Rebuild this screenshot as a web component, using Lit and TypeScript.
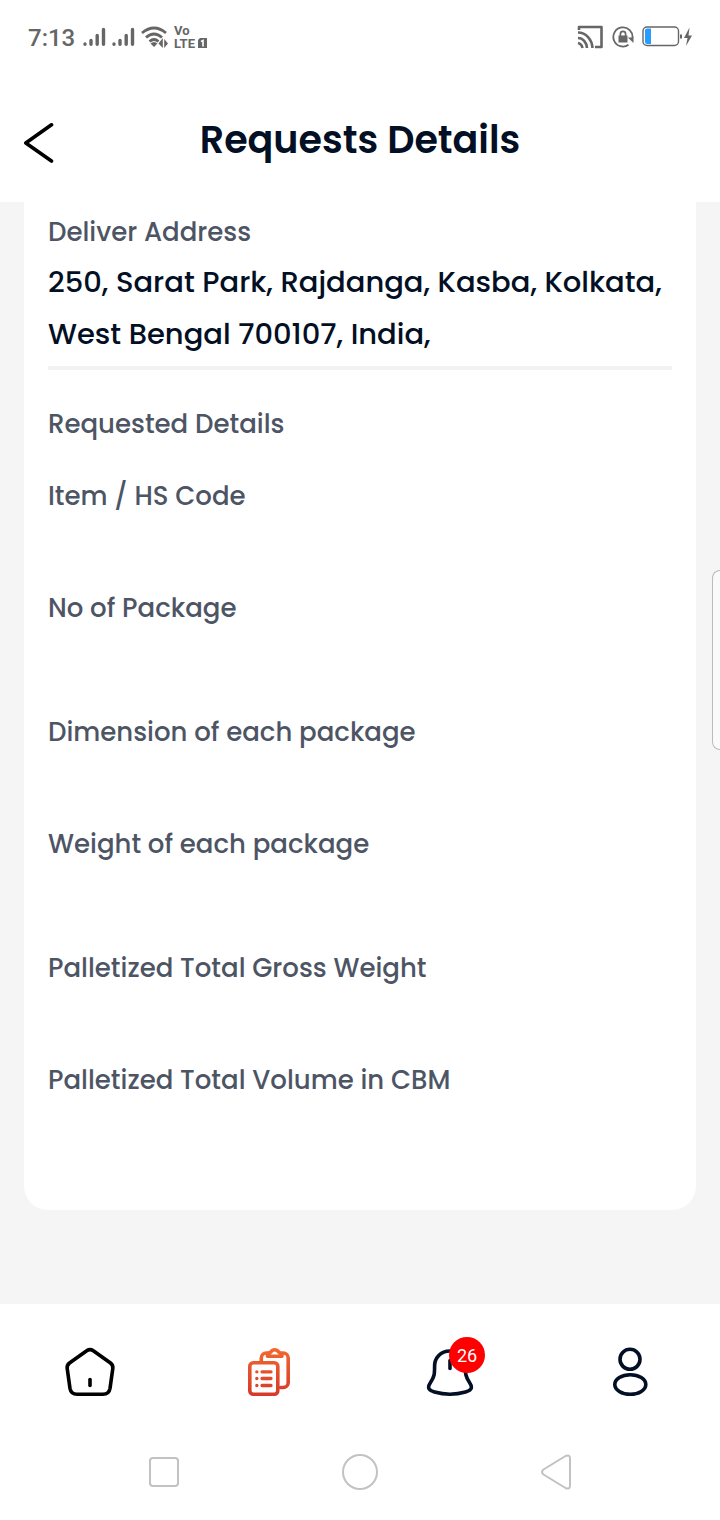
import { LitElement, html, css } from "lit";
import { customElement, property } from "lit/decorators.js";

@customElement("status-bar")
class StatusBar extends LitElement {
  static styles = css`
    :host {
      display: flex;
      justify-content: space-between;
      align-items: center;
      height: 74px;
      padding: 0 27px 0 28px;
      color: #666;
      font-family: Roboto, sans-serif;
    }
    .group { display: flex; align-items: center; }
    .left { gap: 6px; }
    .right { gap: 8px; }
    .time { padding: 2px 2px 0 0; font-size: 24px; font-weight: 500; line-height: 32px; }
    svg { display: block; flex: none; }
    .volte { font: 700 13px/13px Roboto, sans-serif; }
  `;

  private signal() {
    return html`<svg width="23" height="20" viewBox="0 0 23 20" fill="none" stroke="#666" stroke-width="3.4" stroke-linecap="round" aria-hidden="true">
      <path d="M2 17v.2M8 13.500v3.700M14.200 8.500v8.700M20.500 2.500v14.700" />
    </svg>`;
  }

  render() {
    return html`
      <div class="group left">
        <span class="time">7:13</span>
        ${this.signal()}${this.signal()}
        <svg width="27" height="24" viewBox="0 0 27 24" fill="none" stroke="#666" stroke-width="2.800" aria-hidden="true">
          <path d="M1 8Q13 -2 25 8M5 12.500Q13 5.500 21 12.500M8.500 16.500Q13 12.500 17.500 16.500" />
          <path d="M9.500 18.500q3.500-3 7 0L13 22z" fill="#666" stroke="none" />
          <path d="M21.800 13v10l-4.300-4.500zM23.200 23V14l3.800 4.500z" fill="#666" stroke="none" />
        </svg>
        <svg width="34" height="26" viewBox="0 0 34 26" fill="#666" aria-label="VoLTE 1">
          <text class="volte" x="0" y="11">Vo</text>
          <text class="volte" x="0" y="24">LTE</text>
          <path d="M26 14h7v10h-9v-8z" />
          <path d="M27 17.500l2-1v6" fill="none" stroke="#fff" stroke-width="1.600" />
        </svg>
      </div>
      <div class="group right">
        <svg width="27" height="24" viewBox="0 0 27 24" fill="none" stroke="#666" stroke-width="2.600" aria-hidden="true">
          <path d="M2 5V2h22.500v20H18" stroke-linejoin="round" />
          <path d="M1 7.500c8 0 14 7 14.500 15.500M1 13c5 0 8.500 4.500 9 10M1 18c3 .5 4 2.500 4.500 5" />
        </svg>
        <svg width="22" height="22" viewBox="0 0 22 22" fill="none" stroke="#666" stroke-width="1.800" aria-hidden="true">
          <path d="M16.500 18.800A9.600 9.600 0 1 1 20.500 12" />
          <path d="M15.800 11.500h5.700V17z" fill="#666" stroke="none" />
          <path d="M6.500 9.500h9v7h-9z" fill="#666" stroke="none" />
          <path d="M8.400 10V8a2.600 2.600 0 0 1 5.200 0v2" stroke-width="1.700" />
        </svg>
        <svg width="51" height="22" viewBox="0 0 51 22" aria-hidden="true">
          <rect x="1" y="1" width="35.500" height="18.500" rx="4" fill="#fff" stroke="#666" stroke-width="1.400" />
          <path d="M5 2.500h4v15.500H5a2 2 0 0 1-2-2V4.500a2 2 0 0 1 2-2z" fill="#269dff" />
          <path d="M38 8.500h2v4h-2zM47.500 1.500l-5.500 10.500h3.500L44 20l6-10.500h-3.500z" fill="#666" />
        </svg>
      </div>
    `;
  }
}

@customElement("page-header")
class PageHeader extends LitElement {
  @property() heading = "";

  static styles = css`
    :host {
      display: grid;
      grid-template-columns: 1fr auto 1fr;
      align-items: center;
      box-sizing: border-box;
      height: 128px;
      padding: 4px 24px 0;
    }
    button { justify-self: start; padding: 6px 0 0; border: 0; background: none; }
    svg { display: block; }
    h1 {
      margin: 0;
      color: #020f24;
      font-size: 38px;
      line-height: 56px;
      font-weight: 600;
    }
  `;

  render() {
    return html`
      <button aria-label="Back">
        <svg width="30" height="40" viewBox="0 0 30 40" fill="none" stroke="#000" stroke-width="3.600" stroke-linecap="round" stroke-linejoin="round">
          <path d="M27.500 1.800L1.800 20l25.700 18" />
        </svg>
      </button>
      <h1>${this.heading}</h1>
    `;
  }
}

@customElement("details-card")
class DetailsCard extends LitElement {
  static styles = css`
    :host {
      display: block;
      padding: 10px 24px 38px;
      border-radius: 0 0 24px 24px;
      background: #fff;
      color: #4d5565;
      font-size: 26px;
      font-weight: 500;
      line-height: 40px;
    }
    dl, dd, h2 { margin: 0; }
    .delivery { padding-bottom: 6px; border-bottom: 4px solid #f2f2f2; }
    .address {
      margin-top: 4px;
      color: #020f24;
      font-size: 29px;
      line-height: 52px;
    }
    h2 { margin: 34px 0 32px; font-size: inherit; font-weight: inherit; }
    .groups { display: grid; gap: 12px; }
    .value { min-height: 72px; }
  `;

  private groups = [
    ["Item / HS Code", "No of Package"],
    ["Dimension of each package", "Weight of each package"],
    ["Palletized Total Gross Weight", "Palletized Total Volume in CBM"],
  ];

  render() {
    return html`
      <dl class="delivery">
        <dt>Deliver Address</dt>
        <dd class="address">250, Sarat Park, Rajdanga, Kasba, Kolkata, West Bengal 700107, India,</dd>
      </dl>
      <h2>Requested Details</h2>
      <div class="groups">
        ${this.groups.map(
          (labels) => html`<dl>
            ${labels.map((label) => html`<dt>${label}</dt><dd class="value"></dd>`)}
          </dl>`
        )}
      </div>
    `;
  }
}

@customElement("tab-bar")
class TabBar extends LitElement {
  @property({ type: Number }) unread = 0;

  static styles = css`
    :host { display: block; }
    nav {
      display: grid;
      grid-template-columns: repeat(4, 1fr);
      align-items: center;
      justify-items: center;
      height: 136px;
    }
    a { position: relative; display: block; }
    svg { display: block; }
    .badge {
      position: absolute;
      top: -9px;
      right: -9px;
      width: 36px;
      height: 36px;
      border-radius: 50%;
      background: #f00;
      color: #fff;
      font: 400 18px/38px Roboto, sans-serif;
      text-align: center;
    }
  `;

  render() {
    return html`
      <nav aria-label="Main">
        <a href="#home" aria-label="Home">
          <svg width="52" height="52" viewBox="0 0 52 52" fill="none" stroke="#000" stroke-width="3.600" stroke-linecap="round" stroke-linejoin="round">
            <path d="M22.700 4.700Q26 2.500 29.300 4.700L46.500 17Q49.300 19.300 48.800 22.500L46 42.500Q45 48.200 39 48.200H13Q7 48.200 6 42.500L3.200 22.500Q2.700 19.300 5.500 17Z" />
            <path d="M26 33.500v6" />
          </svg>
        </a>
        <a href="#requests" aria-label="Requests">
          <svg width="52" height="52" viewBox="1.500 0 52 52" fill="none" stroke="url(#warm)" stroke-width="3.600" stroke-linecap="round" stroke-linejoin="round">
            <defs>
              <linearGradient id="warm" gradientUnits="userSpaceOnUse" x1="0" y1="2" x2="0" y2="50">
                <stop stop-color="#f26a2d" />
                <stop offset="1" stop-color="#d6382b" />
              </linearGradient>
            </defs>
            <path d="M18.800 15V12a5 5 0 0 1 5-5h1.500M40 7H40.700a5 5 0 0 1 5 5V36.500a5 5 0 0 1-5 5H38" />
            <path d="M25 10.200Q25 7 28 6.500Q29.500 3.800 32 3.800Q35 3.800 36.500 6.500Q39.500 7 39.500 10.200Z" />
            <rect x="7.300" y="16.800" width="28" height="31.400" rx="3.500" />
            <path d="M14.300 25.800h.1M19.500 25.800h9M14.300 32.500h.1M19.500 32.500h9M14.300 39.500h.1M19.500 39.500h9" stroke-width="3.300" />
          </svg>
        </a>
        <a href="#notifications" aria-label="Notifications">
          <svg width="52" height="52" viewBox="0 0 52 52" fill="none" stroke="#020f24" stroke-width="3.600" stroke-linecap="round" stroke-linejoin="round">
            <path d="M26 5C16.500 5 10.600 12 10.600 20C10.600 28 10.500 30.500 6.500 36.500C2.500 42.500 5.500 44.500 10.500 46C20 48.700 32 48.700 41.500 46C46.500 44.500 49.500 42.500 45.500 36.500C41.500 30.500 41.400 28 41.400 20C41.400 12 35.500 5 26 5Z" />
            <path d="M26 14.500v8" />
          </svg>
          <span class="badge">${this.unread}</span>
        </a>
        <a href="#profile" aria-label="Profile">
          <svg width="52" height="52" viewBox="0 0 52 52" fill="none" stroke="#020f24" stroke-width="3.600">
            <circle cx="26" cy="13.300" r="10" />
            <ellipse cx="26.300" cy="38.500" rx="15.500" ry="9.800" />
          </svg>
        </a>
      </nav>
    `;
  }
}

@customElement("system-nav")
class SystemNav extends LitElement {
  static styles = css`
    :host {
      display: grid;
      grid-template-columns: repeat(3, 1fr);
      justify-items: center;
      align-items: center;
      height: 64px;
      padding: 0 66px 16px;
    }
    button { padding: 0; border: 0; background: none; }
    svg { display: block; fill: none; stroke: #c2c2c2; stroke-width: 2; stroke-linejoin: round; }
  `;

  render() {
    return html`
      <button aria-label="Recent apps">
        <svg width="38" height="38" viewBox="0 0 38 38"><rect x="5" y="5" width="28" height="28" rx="3" /></svg>
      </button>
      <button aria-label="Home screen">
        <svg width="38" height="38" viewBox="0 0 38 38"><circle cx="19" cy="19" r="17" /></svg>
      </button>
      <button aria-label="System back">
        <svg width="38" height="38" viewBox="0 0 38 38">
          <path d="M6.500 16.500L28.500 3Q33 1 33 5.500V32.500Q33 37 28.500 35L6.500 21.500Q3.500 19 6.500 16.500Z" />
        </svg>
      </button>
    `;
  }
}

@customElement("app-root")
class AppRoot extends LitElement {
  static styles = css`
    :host {
      display: flex;
      flex-direction: column;
      min-height: 100vh;
      background: #fff;
      font-family: Poppins, Inter, sans-serif;
    }
    main { flex: 1; padding: 0 24px 93px; background: #f5f5f5; }
    .edge-handle {
      position: absolute;
      top: 570px;
      right: 0;
      box-sizing: border-box;
      width: 8px;
      height: 180px;
      border: 1px solid #bbb;
      border-right: 0;
      border-radius: 8px 0 0 8px;
      background: #fafafa;
    }
  `;

  render() {
    return html`
      <status-bar></status-bar>
      <page-header heading="Requests Details"></page-header>
      <main><details-card></details-card></main>
      <tab-bar .unread=${26}></tab-bar>
      <system-nav></system-nav>
      <div class="edge-handle"></div>
    `;
  }
}
